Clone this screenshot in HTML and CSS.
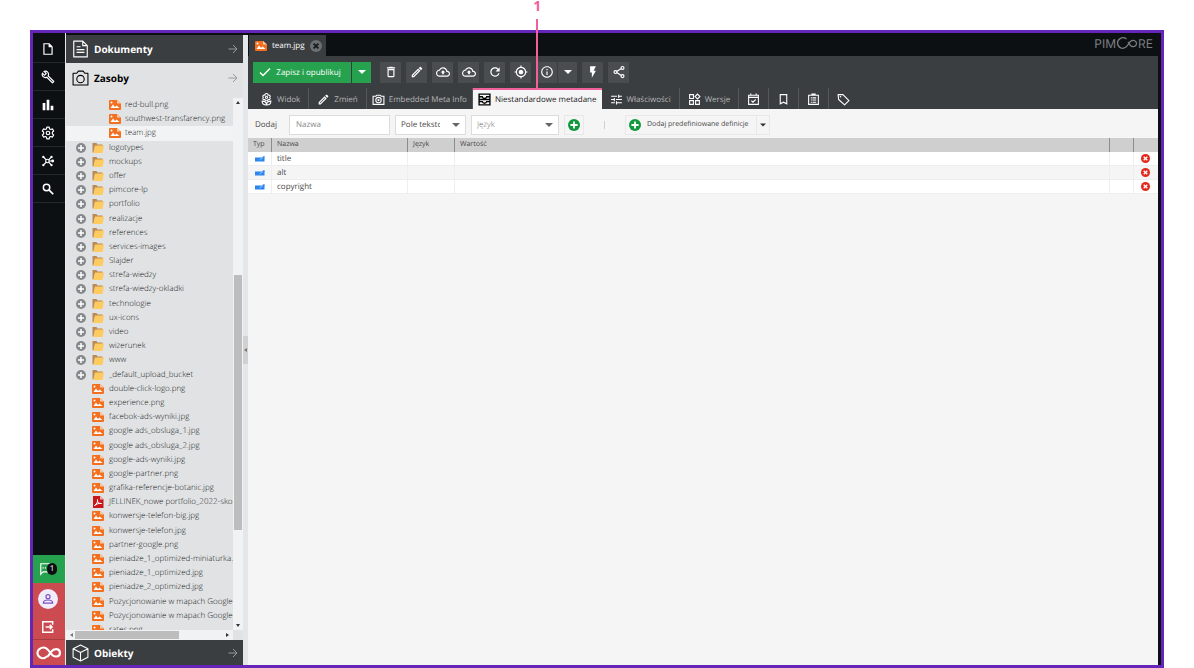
FILE: index.html
```html
<!DOCTYPE html>
<html lang="pl">

<head>
    <meta charset="utf-8">
    <title>Pimcore: team.jpg</title>
    <link rel="stylesheet" href="styles.css">
</head>

<body>
    <svg class="sprite" aria-hidden="true">
        <symbol id="i-image" viewBox="0 0 24 20">
            <path fill="#f37021" d="M2 0h14l8 7v11a2 2 0 0 1-2 2H2a2 2 0 0 1-2-2V2a2 2 0 0 1 2-2z" />
            <path fill="#fbc9a4" d="M16 0l8 7h-8z" />
            <path fill="#fff" d="M3 16l5-7 4 5 3-3 6 5z" />
            <circle fill="#fff" cx="5" cy="5" r="2" />
        </symbol>
        <symbol id="i-folder" viewBox="0 0 24 20">
            <path fill="#b98a56" d="M1 0h8l2 3h10v4H6L3 19H1z" />
            <path fill="#fdcb5f" d="M6 5h18l-3 15H3z" />
        </symbol>
        <symbol id="i-pdf" viewBox="0 0 24 24">
            <path fill="#c8171d" d="M2 0h14l7 7v17H2z" />
            <path fill="#f4b3b3" d="M16 0l7 7h-7z" />
            <path fill="none" stroke="#fff" stroke-width="2" d="M5 19c4-2 7-8 6-12-1 5 3 9 8 8-5-1-10 1-14 4z" />
        </symbol>
        <symbol id="i-plus" viewBox="0 0 20 20">
            <circle cx="10" cy="10" r="10" fill="currentColor" />
            <path d="M10 4v12M4 10h12" stroke="#fff" stroke-width="3" />
        </symbol>
        <symbol id="i-remove" viewBox="0 0 20 20">
            <circle cx="10" cy="10" r="10" fill="#e3271b" />
            <path d="M6 6l8 8M14 6l-8 8" stroke="#fff" stroke-width="3" />
        </symbol>
        <symbol id="i-close" viewBox="0 0 20 20">
            <circle cx="10" cy="10" r="10" fill="#6c6f71" />
            <path d="M6 6l8 8M14 6l-8 8" stroke="#17191b" stroke-width="3" />
        </symbol>
        <symbol id="i-arrow" viewBox="0 0 20 20">
            <path d="M1 10h17M10 2l8 8-8 8" fill="none" stroke="currentColor" stroke-width="2" />
        </symbol>
        <symbol id="i-down" viewBox="0 0 8 4">
            <path d="M0 0h8L4 4z" fill="currentColor" />
        </symbol>
        <symbol id="i-file" viewBox="0 0 24 24">
            <path d="M5 3h9l5 5v13H5zM14 3v5h5" fill="none" stroke="currentColor" stroke-width="2" />
        </symbol>
        <symbol id="i-wrench" viewBox="0 0 24 24">
            <path fill="currentColor" d="M22.610 18.990l-9.080-9.080c.93-2.340.45-5.100-1.440-7C9.790.61 6.210.4 3.660 2.260L7.500 6.110 6.080 7.520 2.250 3.690C.39 6.230.6 9.820 2.900 12.110c1.860 1.860 4.570 2.350 6.890 1.480l9.110 9.110c.39.39 1.020.39 1.410 0l2.300-2.300c.4-.38.4-1.010 0-1.410zm-3 1.600l-9.460-9.460c-.61.45-1.290.72-2 .82-1.360.2-2.790-.21-3.830-1.250C3.370 9.760 2.930 8.500 3 7.260l3.090 3.090 4.240-4.240-3.090-3.090c1.240-.07 2.490.37 3.440 1.310 1.080 1.080 1.490 2.570 1.240 3.960-.12.71-.42 1.370-.88 1.960l9.450 9.450-.88.89z" />
        </symbol>
        <symbol id="i-chart" viewBox="0 0 24 24">
            <path fill="currentColor" d="M4 9h4v11H4zm12 4h4v7h-4zm-6-9h4v16h-4z" />
        </symbol>
        <symbol id="i-gear" viewBox="0 0 24 24">
            <path d="M10 2h4l.7 3 2 1 3-1 2 3.500-2.200 2v3l2.200 2-2 3.500-3-1-2 1L14 22h-4l-.7-3-2-1-3 1-2-3.500 2.200-2v-3l-2.200-2 2-3.500 3 1 2-1z" fill="none" stroke="currentColor" stroke-width="2" stroke-linejoin="round" />
            <circle cx="12" cy="12" r="3" fill="none" stroke="currentColor" stroke-width="2" />
        </symbol>
        <symbol id="i-hub" viewBox="0 0 24 24">
            <g fill="none" stroke="currentColor" stroke-width="2">
                <circle cx="11" cy="12" r="3" />
                <path d="M9 10L5 6M9 14l-4 4M13 10l4-4M13 14l4 4M14 12h5" />
            </g>
            <g fill="currentColor">
                <circle cx="4" cy="5" r="2" />
                <circle cx="18" cy="5" r="2" />
                <circle cx="4" cy="19" r="2" />
                <circle cx="18" cy="19" r="2" />
                <circle cx="20" cy="12" r="2.500" />
            </g>
        </symbol>
        <symbol id="i-search" viewBox="0 0 24 24">
            <path d="M14 14l7 7" stroke="currentColor" stroke-width="3" />
            <circle cx="9.500" cy="9.500" r="5.500" fill="none" stroke="currentColor" stroke-width="2.500" />
        </symbol>
        <symbol id="i-chat" viewBox="0 0 24 24">
            <path d="M3 3h18v14H7l-4 4z" fill="none" stroke="currentColor" stroke-width="2" />
            <path d="M6 10h12" stroke="currentColor" stroke-width="2" stroke-dasharray="2 2" />
        </symbol>
        <symbol id="i-user" viewBox="0 0 24 24">
            <circle cx="12" cy="8" r="3.500" fill="none" stroke="currentColor" stroke-width="2" />
            <path d="M4 19c0-7 16-7 16 0z" fill="none" stroke="currentColor" stroke-width="2" />
        </symbol>
        <symbol id="i-logout" viewBox="0 0 24 24">
            <path d="M20 8V3H3v18h17v-5M8 12h11M15 8l4 4-4 4" fill="none" stroke="currentColor" stroke-width="2.500" />
        </symbol>
        <symbol id="i-infinity" viewBox="0 0 48 26">
            <path d="M20 20C9 30-4 13 7 5c10-7 17 2 21 8 6 10 18 8 18 0 0-9-11-10-17-2l-6 8" fill="none" stroke="currentColor" stroke-width="4" stroke-linecap="round" />
        </symbol>
        <symbol id="i-brand" viewBox="0 0 42 24">
            <path d="M20 4C12-2 2 4 2 12s9 14 17 8c5-4 6-9 10-12 5-3 11 0 11 5 0 6-8 8-12 4l-5-7" fill="none" stroke="currentColor" stroke-width="2.500" />
        </symbol>
        <symbol id="i-doc" viewBox="0 0 28 32">
            <path d="M2 2h16l8 8v20H2zM18 2v8h8M7 12h7M7 17h14M7 22h14" fill="none" stroke="currentColor" stroke-width="2" stroke-linejoin="round" />
        </symbol>
        <symbol id="i-camera-lg" viewBox="0 0 32 30">
            <path d="M2 6h7l3-4h9l3 4h6v22H2z" fill="none" stroke="currentColor" stroke-width="2" stroke-linejoin="round" />
            <circle cx="16" cy="17" r="7" fill="none" stroke="currentColor" stroke-width="2" />
        </symbol>
        <symbol id="i-cube" viewBox="0 0 32 34">
            <path d="M16 2l14 7v16l-14 7-14-7V9zM2 9l14 7 14-7M16 16v16" fill="none" stroke="currentColor" stroke-width="2" stroke-linejoin="round" />
        </symbol>
        <symbol id="i-check" viewBox="0 0 24 24">
            <path d="M2 13l6 6L22 5" fill="none" stroke="currentColor" stroke-width="3" />
        </symbol>
        <symbol id="i-trash" viewBox="0 0 24 24">
            <path fill="currentColor" d="M6 19c0 1.100.9 2 2 2h8c1.100 0 2-.9 2-2V7H6v12zM8 9h8v10H8V9zm7.500-5l-1-1h-5l-1 1H5v2h14V4z" />
        </symbol>
        <symbol id="i-edit" viewBox="0 0 24 24">
            <path fill="currentColor" d="M14.060 9.020l.92.92L5.920 19H5v-.92l9.060-9.060M17.660 3c-.25 0-.51.1-.7.290l-1.830 1.830 3.750 3.750 1.830-1.830c.39-.39.39-1.020 0-1.410l-2.340-2.340c-.2-.2-.45-.29-.71-.29zm-3.600 3.190L3 17.250V21h3.750L17.810 9.940l-3.750-3.750z" />
        </symbol>
        <symbol id="i-cloud" viewBox="0 0 24 24">
            <path fill="currentColor" d="M19.350 10.040C18.670 6.590 15.640 4 12 4 9.110 4 6.600 5.640 5.350 8.040 2.340 8.360 0 10.910 0 14c0 3.310 2.690 6 6 6h13c2.760 0 5-2.240 5-5 0-2.640-2.050-4.780-4.650-4.960zM19 18H6c-2.210 0-4-1.790-4-4 0-2.050 1.530-3.760 3.560-3.970l1.070-.11.5-.95C8.080 7.140 9.940 6 12 6c2.620 0 4.880 1.860 5.390 4.430l.3 1.500 1.530.11c1.560.1 2.780 1.410 2.780 2.960 0 1.650-1.350 3-3 3zM8 13h2.550v3h2.900v-3H16l-4-4z" />
        </symbol>
        <symbol id="i-refresh" viewBox="0 0 24 24">
            <path fill="currentColor" d="M17.650 6.350C16.200 4.900 14.210 4 12 4c-4.420 0-7.990 3.580-7.990 8s3.570 8 7.990 8c3.730 0 6.840-2.550 7.730-6h-2.080c-.82 2.330-3.040 4-5.650 4-3.310 0-6-2.690-6-6s2.690-6 6-6c1.660 0 3.140.69 4.220 1.780L13 11h7V4l-2.350 2.350z" />
        </symbol>
        <symbol id="i-target" viewBox="0 0 24 24">
            <path fill="currentColor" d="M12 8c-2.210 0-4 1.790-4 4s1.790 4 4 4 4-1.790 4-4-1.790-4-4-4zm8.940 3c-.46-4.170-3.770-7.480-7.940-7.940V1h-2v2.060C6.830 3.520 3.520 6.830 3.060 11H1v2h2.060c.46 4.170 3.770 7.480 7.940 7.940V23h2v-2.060c4.170-.46 7.480-3.770 7.940-7.940H23v-2h-2.060zM12 19c-3.870 0-7-3.130-7-7s3.130-7 7-7 7 3.130 7 7-3.130 7-7 7z" />
        </symbol>
        <symbol id="i-info" viewBox="0 0 24 24">
            <path fill="currentColor" d="M11 7h2v2h-2zm0 4h2v6h-2zm1-9C6.480 2 2 6.480 2 12s4.480 10 10 10 10-4.480 10-10S17.520 2 12 2zm0 18c-4.410 0-8-3.590-8-8s3.590-8 8-8 8 3.590 8 8-3.590 8-8 8z" />
        </symbol>
        <symbol id="i-bolt" viewBox="0 0 24 24">
            <path fill="currentColor" d="M7 2v11h3v9l7-12h-4l4-8z" />
        </symbol>
        <symbol id="i-share" viewBox="0 0 24 24">
            <g fill="none" stroke="currentColor" stroke-width="2">
                <path d="M8 11l8-5M8 13l8 5" />
                <circle cx="6" cy="12" r="2.500" />
                <circle cx="18" cy="5" r="2.500" />
                <circle cx="18" cy="19" r="2.500" />
            </g>
        </symbol>
        <symbol id="i-flower" viewBox="0 0 24 24">
            <g fill="none" stroke="currentColor" stroke-width="2">
                <path d="M12 1c2 0 3 1 3 3 3-1 5 2 3 4 2 3 0 5-3 4 0 3-6 3-6 0-3 1-5-1-3-4-2-2 0-5 3-4 0-2 1-3 3-3z" />
                <circle cx="12" cy="8" r="2" />
                <path d="M12 22c-5 0-8-2-8-7 5 0 8 2 8 7zm0 0c5 0 8-2 8-7-5 0-8 2-8 7z" />
            </g>
        </symbol>
        <symbol id="i-camera" viewBox="0 0 24 24">
            <path d="M2 6h5l2-2h6l2 2h5v15H2z" fill="none" stroke="currentColor" stroke-width="2" />
            <circle cx="12" cy="13" r="5" fill="none" stroke="currentColor" stroke-width="2" />
            <circle cx="12" cy="13" r="2" fill="currentColor" />
        </symbol>
        <symbol id="i-meta" viewBox="0 0 24 24">
            <g fill="none" stroke="currentColor" stroke-width="2.500">
                <path d="M2 2h20v20H2zM2 12h20M2 7h6c1 4 7 4 8 0h6M2 16h6c1 4 7 4 8 0h6" />
            </g>
        </symbol>
        <symbol id="i-tune" viewBox="0 0 24 24">
            <path fill="currentColor" d="M2 17v2h7v-2H2zM2 5v2h11V5H2zm11 16v-2h9v-2h-9v-2h-2v6h2zM7 9v2H2v2h5v2h2V9H7zm15 4v-2H11v2h11zm-7-4h2V7h5V5h-5V3h-2v6z" />
        </symbol>
        <symbol id="i-widgets" viewBox="0 0 24 24">
            <path d="M3 3h7v7H3zM3 14h7v7H3zM14 14h7v7h-7zM17.500 2l4.500 4.500-4.500 4.500L13 6.500z" fill="none" stroke="currentColor" stroke-width="2" />
        </symbol>
        <symbol id="i-calendar" viewBox="0 0 24 24">
            <path d="M3 4h18v17H3zM3 8h18M7 1v4M17 1v4M8 14l3 3 5-5" fill="none" stroke="currentColor" stroke-width="2" />
        </symbol>
        <symbol id="i-bookmark" viewBox="0 0 24 24">
            <path d="M6 3h12v17l-6-3-6 3z" fill="none" stroke="currentColor" stroke-width="2" />
        </symbol>
        <symbol id="i-clipboard" viewBox="0 0 24 24">
            <path d="M3 4h18v17H3zM9 4V2h6v2M10 9h7M10 13h7M10 17h7M7 9h2M7 13h2M7 17h2" fill="none" stroke="currentColor" stroke-width="2" />
        </symbol>
        <symbol id="i-tag" viewBox="0 0 24 24">
            <path d="M2 3h9l11 11-8 8L3 12z" fill="none" stroke="currentColor" stroke-width="2" stroke-linejoin="round" />
            <circle cx="6.500" cy="7" r="1.500" fill="currentColor" />
        </symbol>
        <symbol id="i-field" viewBox="0 0 20 12">
            <path fill="#2b86ee" d="M0 3h13l5-3 2 2-1 1v8H0z" />
            <path stroke="#fff" stroke-width="1" d="M9 8l7-5" />
        </symbol>
    </svg>

    <div class="app">
        <nav class="sidebar" aria-label="Menu">
            <button class="side-item" aria-label="Plik"><svg><use href="#i-file" /></svg></button>
            <button class="side-item" aria-label="Narzędzia"><svg><use href="#i-wrench" /></svg></button>
            <button class="side-item" aria-label="Raporty"><svg class="big"><use href="#i-chart" /></svg></button>
            <button class="side-item" aria-label="Ustawienia"><svg><use href="#i-gear" /></svg></button>
            <button class="side-item" aria-label="Dane"><svg><use href="#i-hub" /></svg></button>
            <button class="side-item" aria-label="Szukaj"><svg><use href="#i-search" /></svg></button>
            <div class="side-space"></div>
            <button class="side-item side-notify" aria-label="Powiadomienia"><svg><use href="#i-chat" /></svg><span class="badge">1</span></button>
            <button class="side-item side-red" aria-label="Profil"><span class="avatar"><svg><use href="#i-user" /></svg></span></button>
            <button class="side-item side-red" aria-label="Wyloguj"><svg><use href="#i-logout" /></svg></button>
            <button class="side-item side-red side-logo" aria-label="Pimcore"><svg><use href="#i-infinity" /></svg></button>
        </nav>

        <aside class="panel">
            <button class="panel-head dark"><svg class="panel-icon"><use href="#i-doc" /></svg><span>Dokumenty</span><svg class="panel-arrow"><use href="#i-arrow" /></svg></button>
            <button class="panel-head"><svg class="panel-icon"><use href="#i-camera-lg" /></svg><span>Zasoby</span><svg class="panel-arrow"><use href="#i-arrow" /></svg></button>
            <div class="tree-wrap">
                <div class="tree-view">
                    <ul class="tree">
                        <li class="deep"><svg><use href="#i-image" /></svg>red-bull.png</li>
                        <li class="deep"><svg><use href="#i-image" /></svg>southwest-transfarency.png</li>
                        <li class="deep selected"><svg><use href="#i-image" /></svg>team.jpg</li>
                        <li><button aria-label="Rozwiń"><svg><use href="#i-plus" /></svg></button><svg><use href="#i-folder" /></svg>logotypes</li>
                        <li><button aria-label="Rozwiń"><svg><use href="#i-plus" /></svg></button><svg><use href="#i-folder" /></svg>mockups</li>
                        <li><button aria-label="Rozwiń"><svg><use href="#i-plus" /></svg></button><svg><use href="#i-folder" /></svg>offer</li>
                        <li><button aria-label="Rozwiń"><svg><use href="#i-plus" /></svg></button><svg><use href="#i-folder" /></svg>pimcore-lp</li>
                        <li><button aria-label="Rozwiń"><svg><use href="#i-plus" /></svg></button><svg><use href="#i-folder" /></svg>portfolio</li>
                        <li><button aria-label="Rozwiń"><svg><use href="#i-plus" /></svg></button><svg><use href="#i-folder" /></svg>realizacje</li>
                        <li><button aria-label="Rozwiń"><svg><use href="#i-plus" /></svg></button><svg><use href="#i-folder" /></svg>references</li>
                        <li><button aria-label="Rozwiń"><svg><use href="#i-plus" /></svg></button><svg><use href="#i-folder" /></svg>services-images</li>
                        <li><button aria-label="Rozwiń"><svg><use href="#i-plus" /></svg></button><svg><use href="#i-folder" /></svg>Slajder</li>
                        <li><button aria-label="Rozwiń"><svg><use href="#i-plus" /></svg></button><svg><use href="#i-folder" /></svg>strefa-wiedzy</li>
                        <li><button aria-label="Rozwiń"><svg><use href="#i-plus" /></svg></button><svg><use href="#i-folder" /></svg>strefa-wiedzy-okladki</li>
                        <li><button aria-label="Rozwiń"><svg><use href="#i-plus" /></svg></button><svg><use href="#i-folder" /></svg>technologie</li>
                        <li><button aria-label="Rozwiń"><svg><use href="#i-plus" /></svg></button><svg><use href="#i-folder" /></svg>ux-icons</li>
                        <li><button aria-label="Rozwiń"><svg><use href="#i-plus" /></svg></button><svg><use href="#i-folder" /></svg>video</li>
                        <li><button aria-label="Rozwiń"><svg><use href="#i-plus" /></svg></button><svg><use href="#i-folder" /></svg>wizerunek</li>
                        <li><button aria-label="Rozwiń"><svg><use href="#i-plus" /></svg></button><svg><use href="#i-folder" /></svg>www</li>
                        <li><button aria-label="Rozwiń"><svg><use href="#i-plus" /></svg></button><svg><use href="#i-folder" /></svg>_default_upload_bucket</li>
                        <li class="leaf"><svg><use href="#i-image" /></svg>double-click-logo.png</li>
                        <li class="leaf"><svg><use href="#i-image" /></svg>experience.png</li>
                        <li class="leaf"><svg><use href="#i-image" /></svg>facebok-ads-wyniki.jpg</li>
                        <li class="leaf"><svg><use href="#i-image" /></svg>google ads_obsluga_1.jpg</li>
                        <li class="leaf"><svg><use href="#i-image" /></svg>google ads_obsluga_2.jpg</li>
                        <li class="leaf"><svg><use href="#i-image" /></svg>google-ads-wyniki.jpg</li>
                        <li class="leaf"><svg><use href="#i-image" /></svg>google-partner.png</li>
                        <li class="leaf"><svg><use href="#i-image" /></svg>grafika-referencje-botanic.jpg</li>
                        <li class="leaf pdf"><svg><use href="#i-pdf" /></svg>JELLINEK_nowe portfolio_2022-skom</li>
                        <li class="leaf"><svg><use href="#i-image" /></svg>konwersje-telefon-big.jpg</li>
                        <li class="leaf"><svg><use href="#i-image" /></svg>konwersje-telefon.jpg</li>
                        <li class="leaf"><svg><use href="#i-image" /></svg>partner-google.png</li>
                        <li class="leaf"><svg><use href="#i-image" /></svg>pieniadze_1_optimized-miniaturka.jpg</li>
                        <li class="leaf"><svg><use href="#i-image" /></svg>pieniadze_1_optimized.jpg</li>
                        <li class="leaf"><svg><use href="#i-image" /></svg>pieniadze_2_optimized.jpg</li>
                        <li class="leaf"><svg><use href="#i-image" /></svg>Pozycjonowanie w mapach Google-m</li>
                        <li class="leaf"><svg><use href="#i-image" /></svg>Pozycjonowanie w mapach Google_2</li>
                        <li class="leaf"><svg><use href="#i-image" /></svg>rates.png</li>
                    </ul>
                </div>
                <div class="scroll-y"><span class="tri up"></span><div class="track-y"><div class="thumb-y"></div></div><span class="tri down"></span></div>
                <div class="scroll-x"><span class="tri left"></span><div class="track-x"><div class="thumb-x"></div></div><span class="tri right"></span></div>
            </div>
            <button class="panel-head dark bottom"><svg class="panel-icon"><use href="#i-cube" /></svg><span>Obiekty</span><svg class="panel-arrow"><use href="#i-arrow" /></svg></button>
        </aside>

        <div class="splitter"><div class="handle"><span class="tri left"></span></div></div>

        <main class="main">
            <div class="top">
                <div class="doc-tab">
                    <svg class="doc-icon"><use href="#i-image" /></svg>
                    <span>team.jpg</span>
                    <button aria-label="Zamknij"><svg><use href="#i-close" /></svg></button>
                </div>
                <div class="brand">PIM<svg><use href="#i-brand" /></svg>RE</div>
            </div>

            <div class="toolbar">
                <button class="save"><svg><use href="#i-check" /></svg>Zapisz i opublikuj</button>
                <button class="save-more" aria-label="Więcej"><svg class="caret"><use href="#i-down" /></svg></button>
                <button class="tool" aria-label="Usuń"><svg><use href="#i-trash" /></svg></button>
                <button class="tool" aria-label="Zmień nazwę"><svg><use href="#i-edit" /></svg></button>
                <button class="tool" aria-label="Wgraj nową wersję"><svg><use href="#i-cloud" /></svg></button>
                <button class="tool" aria-label="Pobierz"><svg><use href="#i-cloud" /></svg></button>
                <button class="tool" aria-label="Odśwież"><svg><use href="#i-refresh" /></svg></button>
                <button class="tool" aria-label="Pokaż w drzewie"><svg><use href="#i-target" /></svg></button>
                <button class="tool" aria-label="Informacje"><svg><use href="#i-info" /></svg></button>
                <button class="tool more" aria-label="Więcej informacji"><svg class="caret"><use href="#i-down" /></svg></button>
                <button class="tool" aria-label="Wyczyść miniatury"><svg><use href="#i-bolt" /></svg></button>
                <button class="tool" aria-label="Udostępnij"><svg><use href="#i-share" /></svg></button>
            </div>

            <div class="tabs">
                <button class="tab"><svg><use href="#i-flower" /></svg>Widok</button>
                <button class="tab"><svg><use href="#i-edit" /></svg>Zmień</button>
                <button class="tab tight"><svg><use href="#i-camera" /></svg>Embedded Meta Info</button>
                <div class="marked">
                    <button class="tab tight active"><svg><use href="#i-meta" /></svg>Niestandardowe metadane</button>
                    <div class="marker">1</div>
                </div>
                <button class="tab"><svg><use href="#i-tune" /></svg>Właściwości</button>
                <button class="tab"><svg><use href="#i-widgets" /></svg>Wersje</button>
                <button class="tab" aria-label="Harmonogram"><svg><use href="#i-calendar" /></svg></button>
                <button class="tab" aria-label="Zależności"><svg><use href="#i-bookmark" /></svg></button>
                <button class="tab" aria-label="Notatki"><svg><use href="#i-clipboard" /></svg></button>
                <button class="tab" aria-label="Tagi"><svg><use href="#i-tag" /></svg></button>
            </div>

            <form class="add-bar">
                <label for="meta-name">Dodaj</label>
                <input type="text" id="meta-name" placeholder="Nazwa">
                <div class="select type">
                    <select aria-label="Typ">
                        <option>Pole tekstowe</option>
                    </select>
                    <svg class="caret"><use href="#i-down" /></svg>
                </div>
                <div class="select lang">
                    <select aria-label="Język">
                        <option>Język</option>
                    </select>
                    <svg class="caret"><use href="#i-down" /></svg>
                </div>
                <button type="button" class="add" aria-label="Dodaj"><svg><use href="#i-plus" /></svg></button>
                <span class="divider"></span>
                <button type="button" class="predefined"><svg><use href="#i-plus" /></svg>Dodaj predefiniowane definicje</button>
                <button type="button" class="predefined-more" aria-label="Więcej definicji"><svg class="caret"><use href="#i-down" /></svg></button>
            </form>

            <table class="grid">
                <thead>
                    <tr>
                        <th class="c-icon">Typ</th>
                        <th class="c-name">Nazwa</th>
                        <th class="c-lang">Język</th>
                        <th>Wartość</th>
                        <th class="c-icon"></th>
                        <th class="c-icon"></th>
                    </tr>
                </thead>
                <tbody>
                    <tr>
                        <td><svg class="field"><use href="#i-field" /></svg></td>
                        <td>title</td>
                        <td></td>
                        <td></td>
                        <td></td>
                        <td><button aria-label="Usuń title"><svg><use href="#i-remove" /></svg></button></td>
                    </tr>
                    <tr>
                        <td><svg class="field"><use href="#i-field" /></svg></td>
                        <td>alt</td>
                        <td></td>
                        <td></td>
                        <td></td>
                        <td><button aria-label="Usuń alt"><svg><use href="#i-remove" /></svg></button></td>
                    </tr>
                    <tr>
                        <td><svg class="field"><use href="#i-field" /></svg></td>
                        <td>copyright</td>
                        <td></td>
                        <td></td>
                        <td></td>
                        <td><button aria-label="Usuń copyright"><svg><use href="#i-remove" /></svg></button></td>
                    </tr>
                </tbody>
            </table>
        </main>
    </div>
</body>

</html>
```
FILE: styles.css
```css
* {
    box-sizing: border-box;
    margin: 0;
    padding: 0;
}

body {
    height: 100vh;
    padding: 30px 30px 0;
    background-color: #fff;
    font-family: "Open Sans", sans-serif;
    font-size: 8px;
    text-rendering: geometricPrecision;
    color: #4a4a4a;
}

button,
input,
select {
    font: inherit;
    text-rendering: inherit;
    color: inherit;
    border: 0;
    background: none;
    outline: none;
}

button {
    display: flex;
    align-items: center;
    justify-content: center;
}

svg {
    display: block;
    flex: none;
}

.sprite {
    position: absolute;
    width: 0;
    height: 0;
}

.app {
    display: flex;
    height: 100%;
    border: 3px solid #6526b8;
    background-color: #0c1013;
    padding-right: 3px;
}

/* left icon bar */
.sidebar {
    width: 33px;
    flex: none;
    display: flex;
    flex-direction: column;
    padding-top: 2px;
    border-right: 1px solid #e8eaec;
}

.side-item {
    height: 28px;
    flex: none;
    padding-right: 2px;
    color: #fff;
    border-bottom: 1px solid #24282b;
}

.side-item svg {
    width: 14px;
    height: 14px;
}

.side-item .big {
    width: 16px;
    height: 16px;
}

.side-space {
    flex: 1;
}

.side-notify {
    background-color: #26a24f;
    border: 0;
}

.badge {
    padding: 0 3px;
    margin-left: -6px;
    line-height: 12px;
    border-radius: 6px;
    background-color: #0c1013;
}

.side-red {
    padding-top: 4px;
    background-color: #cc4b50;
    border: 0;
}

.avatar {
    display: flex;
    align-items: center;
    justify-content: center;
    width: 20px;
    height: 20px;
    border-radius: 50%;
    background-color: #f1ecfa;
    color: #7b50c4;
}

.side-logo {
    height: 26px;
    padding-top: 0;
    border-top: 1px solid #a83c41;
}

.side-logo svg {
    width: 25px;
}

/* tree panel */
.panel {
    width: 177px;
    flex: none;
    display: flex;
    flex-direction: column;
    margin-top: 2px;
    background: #e0e2e4;
}

.panel-head {
    height: 29px;
    flex: none;
    padding: 0 5px 0 6px;
    gap: 5px;
    font-size: 10px;
    font-weight: 700;
    color: #000;
}

.panel-head span {
    flex: 1;
    text-align: left;
}

.dark {
    height: 28px;
    background-color: #3b3e41;
    color: #fff;
}

.bottom {
    height: 25px;
}

.panel-icon {
    width: 17px;
    height: 18px;
}

.panel-arrow {
    width: 10px;
    height: 10px;
    color: #97999b;
}

.tree-wrap {
    flex: 1;
    min-height: 0;
    margin-top: 6px;
    display: grid;
    grid-template-columns: 1fr 10px;
    grid-template-rows: 1fr 10px;
}

.tree-view {
    min-height: 0;
    overflow: hidden;
}

.tree {
    display: grid;
    grid-auto-rows: 1fr;
    height: calc(100% + 7px);
    list-style: none;
    font-weight: 300;
    color: #222;
    white-space: nowrap;
}

.tree li {
    display: flex;
    align-items: center;
    gap: 5px;
    min-height: 0;
    padding-left: 10px;
    line-height: 12px;
}

.tree li > svg {
    width: 12px;
    height: 10px;
}

.tree button {
    margin-right: 1px;
    color: #85898c;
}

.tree button svg {
    width: 10px;
    height: 10px;
}

.tree .leaf {
    padding-left: 26px;
}

.tree .deep {
    padding-left: 43px;
    gap: 4px;
}

.tree .pdf svg {
    height: 12px;
}

.tree .selected {
    margin-right: 7px;
    background-color: #f2f3f4;
}

.scroll-y,
.scroll-x {
    display: flex;
    align-items: center;
    justify-content: space-between;
    background-color: #f1f2f3;
}

.scroll-y {
    flex-direction: column;
    padding: 3px 0;
}

.scroll-x {
    padding: 0 4px;
}

.track-y {
    flex: 1;
    align-self: stretch;
    display: grid;
    grid-template-rows: 170fr 254fr 94fr;
}

.thumb-y {
    grid-row: 2;
    margin: 0 1px;
    background-color: #bdbdbd;
}

.track-x {
    flex: 1;
    padding: 0 2px;
}

.thumb-x {
    width: 70%;
    height: 8px;
    background-color: #bdbdbd;
}

.tri {
    border: 2px solid transparent;
}

.up {
    border-bottom: 3px solid #333;
    border-top: 0;
}

.down {
    border-top: 3px solid #333;
    border-bottom: 0;
}

.left {
    border-right: 3px solid #777;
    border-left: 0;
}

.right {
    border-left: 3px solid #333;
    border-right: 0;
}

.splitter {
    width: 5px;
    flex: none;
    display: flex;
    flex-direction: column;
    justify-content: center;
    margin-top: 2px;
    background-color: #e4e6e9;
}

.handle {
    height: 28px;
    display: flex;
    align-items: center;
    justify-content: center;
    background-color: #cfd1d3;
}

/* editor */
.main {
    flex: 1;
    min-width: 0;
    background-color: #f5f5f5;
}

.top {
    display: flex;
    justify-content: space-between;
    height: 23px;
    padding: 2px 5px 0 1px;
    background-color: #0c1013;
}

.doc-tab {
    display: flex;
    align-items: center;
    gap: 5px;
    padding: 0 4px 0 6px;
    background-color: #3b3e41;
    color: #fff;
}

.doc-icon {
    width: 12px;
    height: 10px;
}

.doc-tab button svg {
    width: 12px;
    height: 12px;
}

.brand {
    display: flex;
    align-items: center;
    height: 16px;
    font-family: Inter, sans-serif;
    font-size: 12px;
    color: #7b7e81;
}

.brand svg {
    width: 22px;
    height: 12px;
}

.toolbar {
    display: flex;
    align-items: center;
    gap: 5px;
    height: 32px;
    padding-left: 5px;
    background-color: #3b3e41;
    color: #fff;
}

.toolbar button {
    height: 21px;
}

.toolbar svg {
    width: 14px;
    height: 14px;
}

.toolbar .caret,
.caret {
    width: 8px;
    height: 4px;
}

.toolbar .save {
    gap: 5px;
    width: 98px;
    padding-right: 4px;
    background-color: #26a24f;
}

.toolbar .save svg {
    width: 12px;
    height: 12px;
}

.save-more {
    width: 19px;
    margin: 0 4px 0 -4px;
    background-color: #26a24f;
}

.tool {
    width: 21px;
    background-color: #4a4d50;
}

.more {
    width: 19px;
    margin-left: -4px;
}

.tabs {
    display: flex;
    height: 21px;
    padding-left: 4px;
    background-color: #3b3e41;
}

.tab {
    height: 100%;
    gap: 4px;
    padding: 2px 8px 0;
    border-right: 1px solid #55585b;
    color: #b4b6b8;
    white-space: nowrap;
}

.tab:last-child {
    border: 0;
}

.tab svg {
    width: 13px;
    height: 13px;
    color: #fff;
}

.tight {
    padding: 2px 5px 0;
}

.marked {
    position: relative;
}

.marked .active {
    border-right: 0;
    box-shadow: inset 0 2px #f0609a;
    background-color: #f5f5f5;
    color: #222;
}

.active svg {
    color: #000;
}

/* numbered callout that hangs over the tab */
.marker {
    position: absolute;
    bottom: 100%;
    left: 50%;
    width: 10px;
    margin-left: -5px;
    display: flex;
    flex-direction: column;
    align-items: center;
    gap: 4px;
    font-size: 14px;
    line-height: 16px;
    font-weight: 700;
    color: #f0609a;
}

.marker::after {
    content: "";
    width: 2px;
    height: 69px;
    background-color: #f0609a;
}

.add-bar {
    display: flex;
    align-items: center;
    gap: 5px;
    height: 29px;
    padding: 2px 7px 0;
}

.add-bar input,
.select,
.add,
.predefined,
.predefined-more {
    height: 20px;
    border: 1px solid #dcdcdc;
    background-color: #fff;
}

.add-bar label {
    width: 24px;
}

.add-bar input {
    width: 101px;
    margin-left: 5px;
    padding: 0 6px;
}

.add-bar input::placeholder {
    color: #888;
}

.select {
    display: flex;
    align-items: center;
    padding: 0 5px;
}

.select select {
    flex: 1;
    min-width: 0;
    margin-right: 12px;
    appearance: none;
}

.select .caret {
    color: #666;
}

.type {
    width: 71px;
}

.lang {
    width: 88px;
    color: #666;
    font-weight: 300;
}

.add-bar .add,
.add-bar .predefined,
.add-bar .predefined-more {
    border-color: #e8e8e8;
    background-color: #f5f5f5;
}

.add {
    width: 20px;
}

.add svg,
.predefined svg {
    width: 12px;
    height: 12px;
    color: #12983c;
}

.divider {
    width: 1px;
    height: 8px;
    margin: 0 15px;
    background-color: #d0d0d0;
}

.predefined {
    gap: 6px;
    padding: 0 7px 0 3px;
    font-size: 7px;
}

.predefined-more {
    width: 14px;
    margin-left: -6px;
    color: #333;
}

.predefined-more .caret {
    width: 6px;
}

.grid {
    width: 100%;
    table-layout: fixed;
    border-spacing: 0;
}

.grid th {
    height: 14px;
    padding: 0 5px;
    text-align: left;
    font-size: 7px;
    line-height: 14px;
    font-weight: 400;
    background-color: #cfcfcf;
    border-right: 1px solid #8d8d8d;
}

.grid td {
    height: 14px;
    padding: 0 5px;
    line-height: 12px;
    background-color: #fff;
    border-right: 1px solid #eee;
    border-bottom: 1px solid #eee;
}

.grid tr:nth-child(even) td {
    background-color: #f5f5f5;
}

.grid th:last-child,
.grid td:last-child {
    border-right: 0;
}

.c-icon {
    width: 24px;
}

.c-name {
    width: 136px;
}

.c-lang {
    width: 47px;
}

.grid td:first-child,
.grid td:last-child {
    padding: 0 7px;
}

.grid button svg {
    width: 9px;
    height: 9px;
}

.field {
    width: 10px;
    height: 6px;
}
```
